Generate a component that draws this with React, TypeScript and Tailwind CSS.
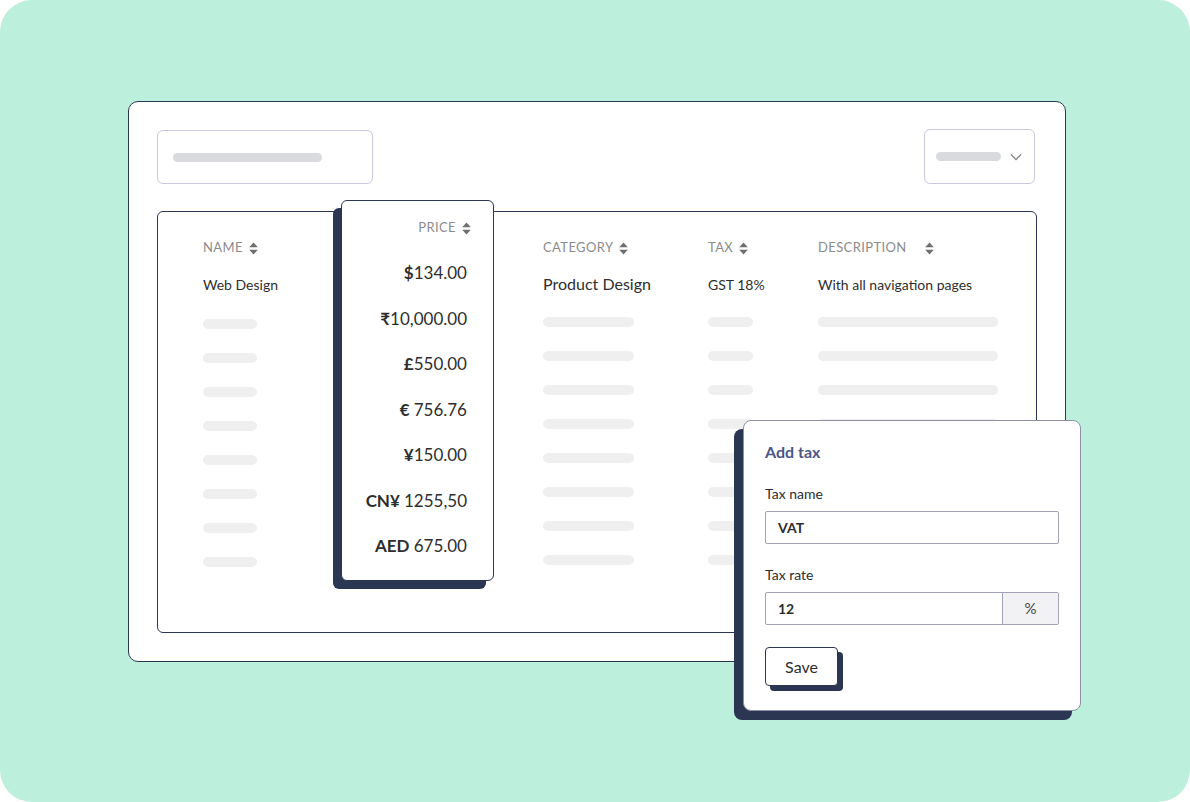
import React from "react";

const Sort = () => (
  <svg width="9" height="13" viewBox="0 0 9 13" className="shrink-0">
    <path d="M4.5 0.5L8.8 5.3H0.2z" fill="#6f6f6f" />
    <path d="M4.5 12.5L0.2 7.7H8.8z" fill="#6f6f6f" />
  </svg>
);

const Skel = ({ w }: { w: string }) => (
  <div className="h-[34px] flex items-center">
    <div className={`h-[10px] rounded-full bg-[#efefef] ${w}`} />
  </div>
);

const rows = [0, 1, 2, 3, 4, 5, 6, 7];

const prices: [string, string][] = [
  ["$", "134.00"],
  ["₹", "10,000.00"],
  ["£", "550.00"],
  ["€ ", "756.76"],
  ["¥", "150.00"],
  ["CN¥ ", "1255,50"],
  ["AED ", "675.00"],
];

export default function App() {
  return (
    <div
      className="w-[1190px] h-[802px] bg-white"
      style={{ fontFamily: "Lato, 'Noto Sans', 'DejaVu Sans', sans-serif" }}
    >
      <div className="relative w-full h-full rounded-[32px] bg-[#bcefdc] pt-[101px] pl-[128px]">
        {/* Window */}
        <div className="w-[938px] h-[561px] rounded-[10px] border border-[#2b3652] bg-white px-[28px] pt-[28px]">
          <div className="flex justify-between items-start">
            <div className="w-[216px] h-[54px] rounded-[6px] border border-[#c9c9de] flex items-center pl-[15px]">
              <div className="w-[149px] h-[9px] rounded-full bg-[#d9dadd]" />
            </div>
            <div className="w-[111px] h-[55px] -mt-[1px] mr-[2px] rounded-[6px] border border-[#c9c9de] flex items-center pl-[11px] gap-[9px]">
              <div className="w-[65px] h-[9px] rounded-full bg-[#d9dadd]" />
              <svg width="12" height="8" viewBox="0 0 12 8">
                <path d="M1 1.5L6 6.5L11 1.5" fill="none" stroke="#8a8a8a" strokeWidth="1.4" />
              </svg>
            </div>
          </div>

          {/* Table */}
          <div className="mt-[27px] w-[880px] h-[422px] rounded-[6px] border border-[#2b3652] flex items-start pl-[45px]">
            {/* Name */}
            <div className="w-[138px] pt-[28px]">
              <div className="h-[16px] flex items-center gap-[6px] text-[13px] text-[#8b8b8b] tracking-[0.03em]">
                NAME <Sort />
              </div>
              <div className="mt-[10px] h-[36px] flex items-center text-[14px] text-[#2e2e2e]">Web Design</div>
              <div className="mt-[5px]">
                {rows.map((r) => (
                  <Skel key={r} w="w-[54px]" />
                ))}
              </div>
            </div>

            {/* Price card */}
            <div className="w-[153px] h-[381px] -mt-[12px] rounded-[6px] border border-[#2b3652] bg-white shadow-[-8px_8px_0_0_#2b3652] flex flex-col items-end pr-[22px] pt-[19px]">
              <div className="h-[16px] flex items-center gap-[6px] text-[13px] text-[#8b8b8b] tracking-[0.03em]">
                PRICE <Sort />
              </div>
              <div className="mt-[14px] pr-[4px] flex flex-col items-end">
                {prices.map(([s, v]) => (
                  <div key={v} className="h-[45.5px] flex items-center text-[17px] text-[#2e2e2e] whitespace-pre">
                    <span className="font-bold">{s}</span>
                    <span>{v}</span>
                  </div>
                ))}
              </div>
            </div>

            {/* Category */}
            <div className="ml-[49px] w-[165px] pt-[28px]">
              <div className="h-[16px] flex items-center gap-[6px] text-[13px] text-[#8b8b8b] tracking-[0.03em]">
                CATEGORY <Sort />
              </div>
              <div className="mt-[10px] h-[36px] flex items-center text-[16px] text-[#2e2e2e]">Product Design</div>
              <div className="mt-[3px]">
                {rows.map((r) => (
                  <Skel key={r} w="w-[91px]" />
                ))}
              </div>
            </div>

            {/* Tax */}
            <div className="w-[110px] pt-[28px]">
              <div className="h-[16px] flex items-center gap-[6px] text-[13px] text-[#8b8b8b] tracking-[0.03em]">
                TAX <Sort />
              </div>
              <div className="mt-[10px] h-[36px] flex items-center text-[14px] text-[#2e2e2e]">GST 18%</div>
              <div className="mt-[3px]">
                {rows.map((r) => (
                  <Skel key={r} w="w-[45px]" />
                ))}
              </div>
            </div>

            {/* Description */}
            <div className="w-[180px] pt-[28px]">
              <div className="h-[16px] flex items-center gap-[18px] text-[13px] text-[#8b8b8b] tracking-[0.03em]">
                DESCRIPTION <Sort />
              </div>
              <div className="mt-[10px] h-[36px] flex items-center text-[14px] text-[#2e2e2e] whitespace-nowrap">
                With all navigation pages
              </div>
              <div className="mt-[3px]">
                {rows.map((r) => (
                  <Skel key={r} w="w-[180px]" />
                ))}
              </div>
            </div>
          </div>
        </div>

        {/* Modal */}
        <div className="absolute left-[743px] top-[420px] w-[338px] h-[291px] rounded-[8px] border border-[#8e90a2] bg-white shadow-[-9px_9px_0_0_#2b3652] pl-[21px] pt-[21px]">
          <div className="text-[16px] leading-[20px] font-bold text-[#4b5686]">Add tax</div>
          <div className="mt-[24px] text-[14px] leading-[16px] text-[#2e2e2e]">Tax name</div>
          <div className="mt-[9px] w-[294px] h-[33px] border border-[#a3a3b8] rounded-[2px] flex items-center pl-[12px] text-[14px] font-bold text-[#2e2e2e]">
            VAT
          </div>
          <div className="mt-[23px] text-[14px] leading-[16px] text-[#2e2e2e]">Tax rate</div>
          <div className="mt-[9px] w-[294px] h-[33px] border border-[#a3a3b8] rounded-[2px] flex">
            <div className="flex-1 flex items-center pl-[12px] text-[14px] font-bold text-[#2e2e2e]">12</div>
            <div className="w-[56px] border-l border-[#a3a3b8] bg-[#f2f2f4] flex items-center justify-center text-[15px] text-[#444]">
              %
            </div>
          </div>
          <div className="mt-[22px] w-[73px] h-[39px] rounded-[4px] border border-[#2b3652] bg-white shadow-[5px_5px_0_0_#2b3652] flex items-center justify-center text-[16px] text-[#2e2e2e]">
            Save
          </div>
        </div>
      </div>
    </div>
  );
}
